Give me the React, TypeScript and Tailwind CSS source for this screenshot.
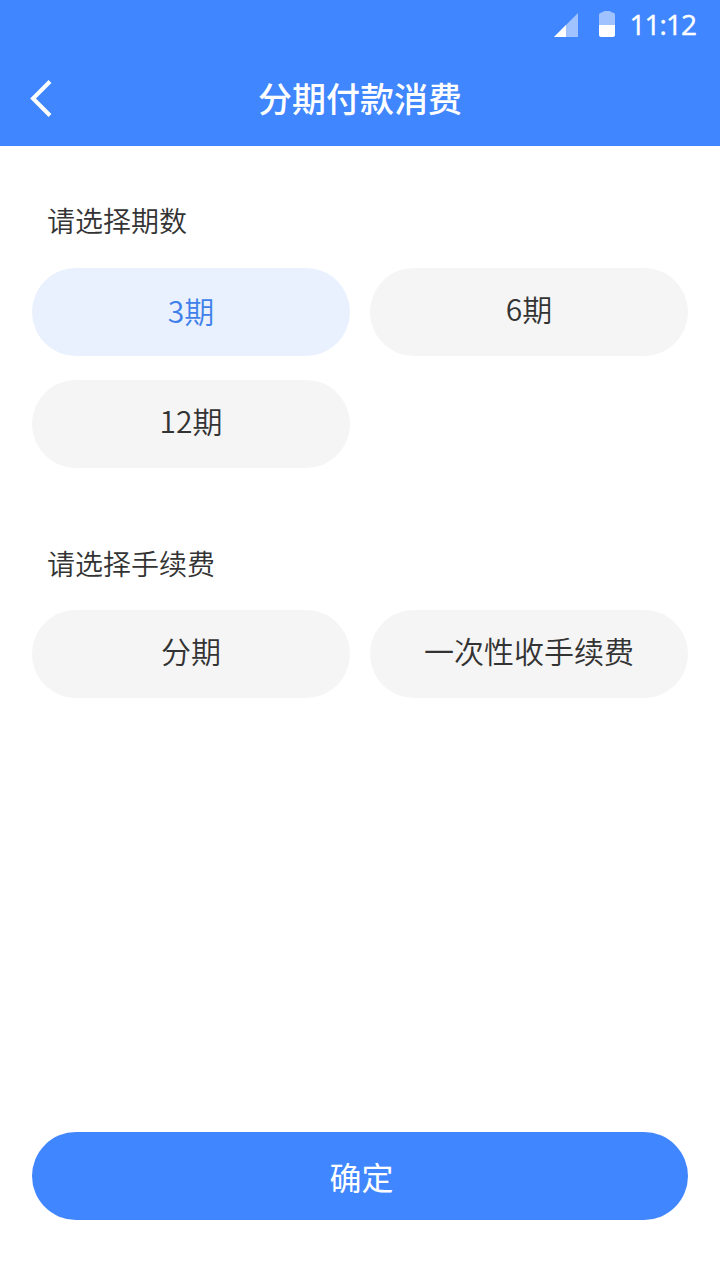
import { useState } from "react"

function StatusBar() {
  return (
    <div className="flex h-12 items-center justify-end pr-6 font-['Open_Sans',sans-serif]">
      <svg className="mr-[21px] mt-0.5" width="24" height="24" viewBox="0 0 25 25" fill="#fff">
        <path d="M25 0V25H0z" opacity="0.5" />
        <path d="M12.5 12.5V25H0z" />
      </svg>
      <svg className="mr-[15px]" width="16" height="26" viewBox="0 0 16 26" fill="#fff">
        <path d="M3 1.5Q4 0 6 0h4q2 0 3 1.5Q16 1.5 16 4v10H0V4Q0 1.5 3 1.5z" opacity="0.5" />
        <path d="M0 14h16v10a2 2 0 0 1-2 2H2a2 2 0 0 1-2-2z" />
      </svg>
      <span className="text-[28px] leading-none font-medium tracking-[-1px] [-webkit-text-stroke:0.4px_#fff]">11:12</span>
    </div>
  )
}

function Header() {
  return (
    <header className="h-[146px] bg-[#4086ff] text-white">
      <StatusBar />
      <div className="grid h-[98px] grid-cols-[80px_1fr_80px] items-center pt-0.5">
        <button className="pl-[30px]">
          <svg width="22" height="38" viewBox="0 0 22 38" fill="none" stroke="#fff" strokeWidth="4">
            <path d="M20 2.5L3 19.5L20 36.5" />
          </svg>
        </button>
        <h1 className="text-center text-[34px] leading-[50px] font-medium">分期付款消费</h1>
      </div>
    </header>
  )
}

interface OptionProps {
  label: string
  active: boolean
  onClick: () => void
}

function Option({ label, active, onClick }: OptionProps) {
  return (
    <button
      onClick={onClick}
      className={`h-22 rounded-full text-[30px] leading-[44px] ${active ? "bg-[#eaf1fe] pb-1 text-[#4080ea]" : "bg-[#f5f5f5] pb-2 text-[#333]"}`}
    >
      {label}
    </button>
  )
}

export default function App() {
  const [period, setPeriod] = useState("3期")
  const [fee, setFee] = useState("")

  return (
    <div className="flex h-[1280px] w-[720px] flex-col bg-white font-['Noto_Sans_CJK_SC',sans-serif] font-[350] text-[#333]">
      <Header />
      <main className="flex-1 px-8">
        <h2 className="mt-[54px] pl-[15px] text-[28px] leading-10">请选择期数</h2>
        <div className="mt-7 grid grid-cols-2 gap-x-5 gap-y-6">
          {["3期", "6期", "12期"].map((item) => (
            <Option key={item} label={item} active={period === item} onClick={() => setPeriod(item)} />
          ))}
        </div>
        <h2 className="mt-[75px] pl-[15px] text-[28px] leading-10">请选择手续费</h2>
        <div className="mt-[27px] grid grid-cols-2 gap-x-5">
          {["分期", "一次性收手续费"].map((item) => (
            <Option key={item} label={item} active={fee === item} onClick={() => setFee(item)} />
          ))}
        </div>
      </main>
      <button className="mx-8 mb-[60px] h-22 rounded-full bg-[#4086ff] pl-[3px] text-[32px] leading-[46px] font-normal text-white">确定</button>
    </div>
  )
}
